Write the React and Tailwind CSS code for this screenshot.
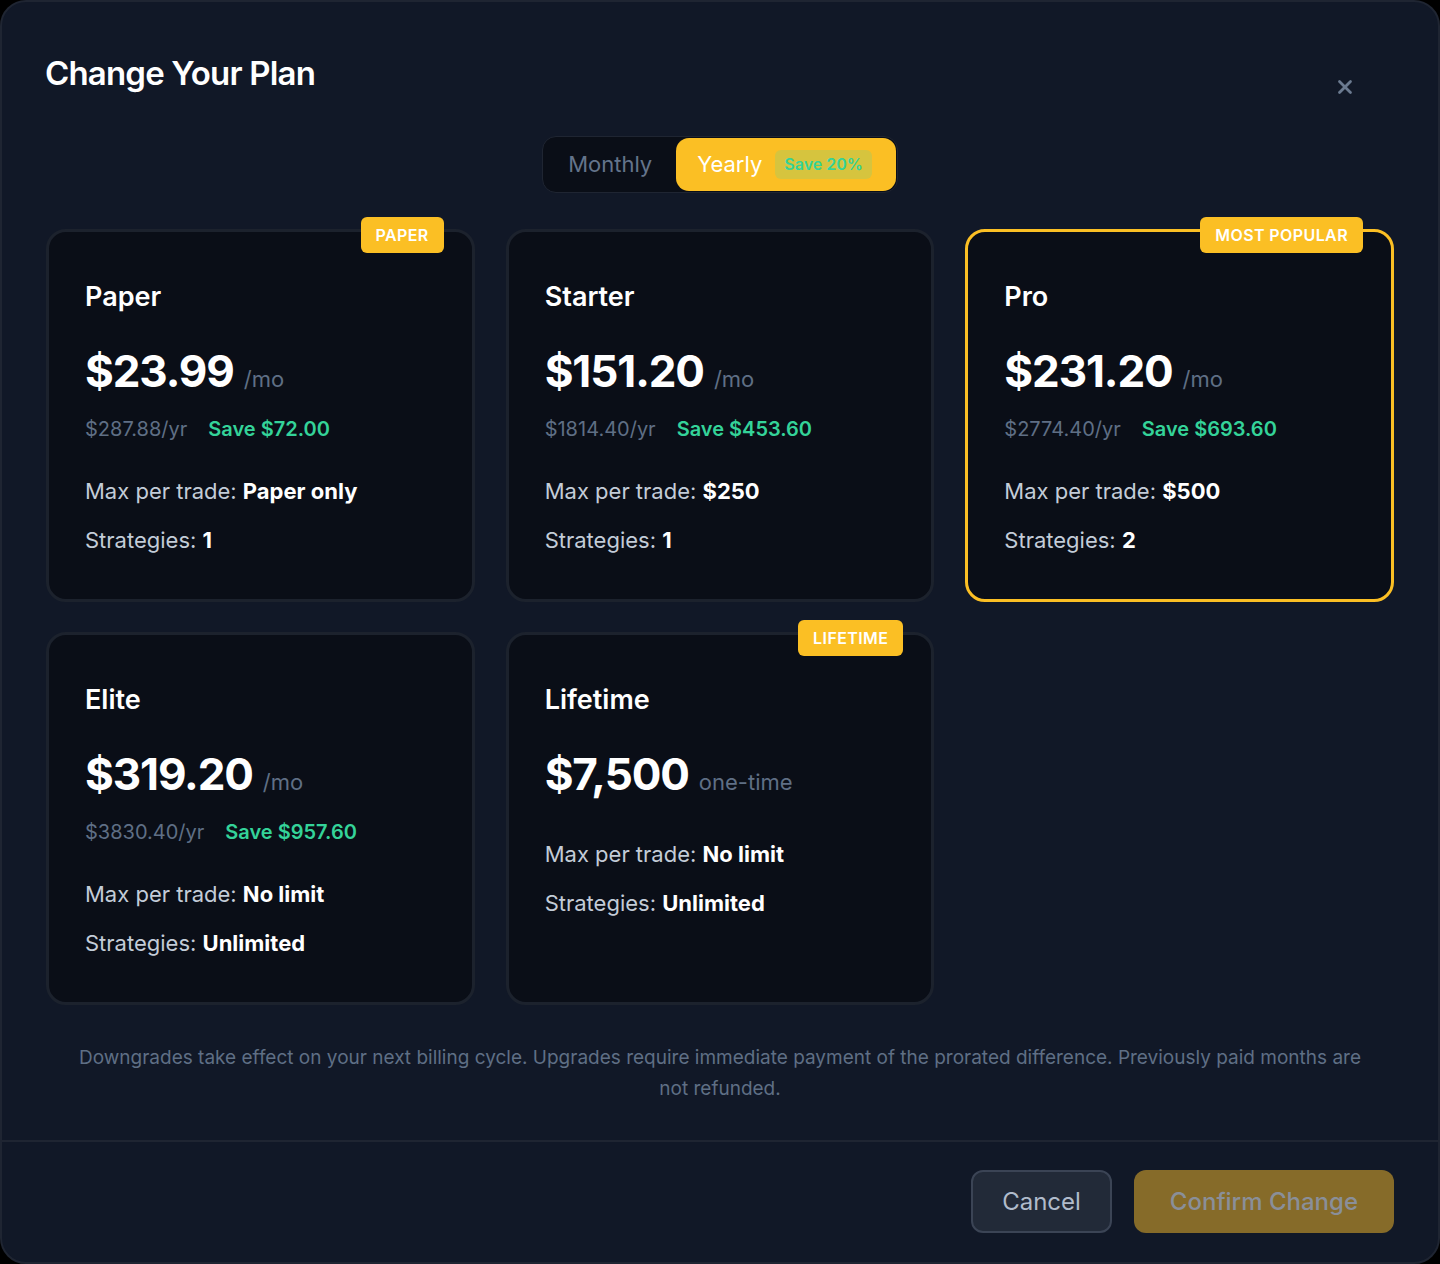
import React, { useState } from "react";
import { X } from "lucide-react";

const PLANS = [
  { name: "Paper", price: "$23.99", unit: "/mo", yearly: "$287.88/yr", save: "Save $72.00", max: "Paper only", strategies: "1", badge: "PAPER" },
  { name: "Starter", price: "$151.20", unit: "/mo", yearly: "$1814.40/yr", save: "Save $453.60", max: "$250", strategies: "1" },
  { name: "Pro", price: "$231.20", unit: "/mo", yearly: "$2774.40/yr", save: "Save $693.60", max: "$500", strategies: "2", badge: "MOST POPULAR", selected: true },
  { name: "Elite", price: "$319.20", unit: "/mo", yearly: "$3830.40/yr", save: "Save $957.60", max: "No limit", strategies: "Unlimited" },
  { name: "Lifetime", price: "$7,500", unit: "one-time", max: "No limit", strategies: "Unlimited", badge: "LIFETIME" },
];

function PlanCard({ plan }) {
  return (
    <div
      className={`relative h-[373px] rounded-[20px] bg-[#0a0e17] px-[36px] pt-[47px] ${plan.selected ? "border-[3px] border-[#fbbf24]" : "border-[3px] border-[#1c222d]"
        }`}
    >
      {plan.badge && (
        <span className="absolute -top-[15px] right-[28px] rounded-md bg-[#fbbf24] px-[15px] py-[6px] text-[16px] font-semibold leading-[24px] tracking-wide text-white">
          {plan.badge}
        </span>
      )}
      <div className="text-[27px] font-semibold leading-[36px] text-white">{plan.name}</div>

      <div className="mt-[26px] flex items-baseline gap-[10px]">
        <span className="text-[44px] font-bold leading-[60px] tracking-tight text-white">{plan.price}</span>
        <span className="text-[22px] text-[#5f6f85]">{plan.unit}</span>
      </div>

      {plan.yearly && (
        <div className="mt-[14px] flex items-center gap-[21px] text-[20px] leading-[28px]">
          <span className="text-[#5f6f85]">{plan.yearly}</span>
          <span className="font-semibold text-[#34d399]">{plan.save}</span>
        </div>
      )}

      <div className={`${plan.yearly ? "mt-[33px]" : "mt-[35px]"} space-y-[19px] text-[22px] leading-[30px] text-[#c3ccd8]`}>
        <div>
          Max per trade: <span className="font-bold text-white">{plan.max}</span>
        </div>
        <div>
          Strategies: <span className="font-bold text-white">{plan.strategies}</span>
        </div>
      </div>
    </div>
  );
}

export default function App() {
  const [cycle, setCycle] = useState("yearly");

  return (
    <div className="min-h-[1264px] bg-black" style={{ fontFamily: "Inter, 'Noto Sans', sans-serif" }}>
      <div className="flex h-[1264px] flex-col rounded-[26px] border-2 border-[#1f2532] bg-[#111827]">
        {/* Header */}
        <div className="flex items-start justify-between pl-[43px] pr-[44px] pt-[50px]">
          <h2 className="text-[33px] font-semibold leading-[42px] tracking-tight text-white">Change Your Plan</h2>
          <button className="mr-[32px] mt-[18px] p-[6px] text-[#6b7a90]">
            <X className="h-[22px] w-[22px]" strokeWidth={3} />
          </button>
        </div>

        {/* Billing toggle */}
        <div className="mt-[32px] flex justify-center">
          <div className="flex h-[57px] items-center rounded-[14px] border border-[#1f2532] bg-[#0a0e17] p-px">
            <button
              onClick={() => setCycle("monthly")}
              className={`h-full px-[24px] text-[22px] ${cycle === "monthly" ? "text-white" : "text-[#64748b]"}`}
            >
              Monthly
            </button>
            <button
              onClick={() => setCycle("yearly")}
              className="flex h-full items-center gap-[13px] rounded-[13px] bg-[#fbbf24] pl-[21px] pr-[24px] text-[22px] text-white"
            >
              Yearly
              <span className="rounded-md bg-[#d6c43e] px-[9px] py-[3px] text-[16px] font-semibold leading-[23px] text-[#34d399]">
                Save 20%
              </span>
            </button>
          </div>
        </div>

        {/* Plans */}
        <div className="mt-[36px] grid grid-cols-3 gap-x-[31px] gap-y-[30px] pl-[44px] pr-[44px]">
          {PLANS.map((p) => (
            <PlanCard key={p.name} plan={p} />
          ))}
        </div>

        <p className="mt-[37px] px-[66px] text-center text-[19px] leading-[31px] text-[#5f6f85]">
          Downgrades take effect on your next billing cycle. Upgrades require immediate payment of the prorated difference. Previously paid months are not refunded.
        </p>

        {/* Footer */}
        <div className="mt-[36px] flex flex-1 items-start justify-end gap-[22px] border-t-2 border-[#1f2532] px-[44px] pt-[28px]">
          <button className="h-[63px] rounded-xl border-2 border-[#3b4455] bg-[#222a38] px-[29px] text-[24px] text-[#b0bbcb]">
            Cancel
          </button>
          <button disabled className="h-[63px] rounded-xl bg-[#866b29] px-[36px] text-[24px] font-medium text-[#8a8f99]">
            Confirm Change
          </button>
        </div>
      </div>
    </div>
  );
}
